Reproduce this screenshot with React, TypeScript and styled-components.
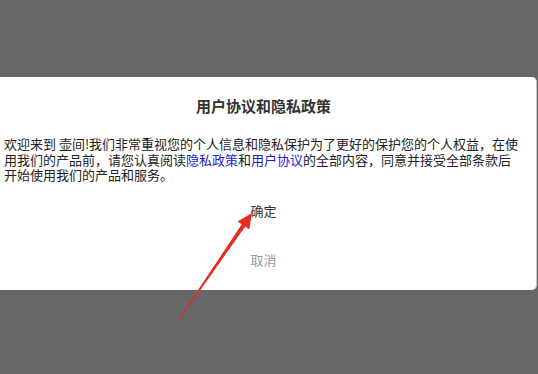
import styled, { createGlobalStyle } from "styled-components";

const GlobalStyle = createGlobalStyle`
  html, body {
    margin: 0;
    padding: 0;
    width: 538px;
    height: 374px;
    overflow: hidden;
  }
  body {
    font-family: "Noto Sans CJK SC", "Noto Sans", sans-serif;
  }
`;

const Overlay = styled.div`
  position: relative;
  width: 538px;
  height: 374px;
  background: #686868;
  padding-top: 77px;
  box-sizing: border-box;
  overflow: hidden;
`;

const Dialog = styled.div`
  margin-left: -4px;
  width: 541px;
  height: 213px;
  box-sizing: border-box;
  background: #fff;
  border-radius: 5px;
  border-right: 1px solid #c8c8c8;
  padding: 19px 15px 16px 8px;
  display: flex;
  flex-direction: column;
`;

const Title = styled.h2`
  margin: 0 0 0 2px;
  font-size: 15px;
  line-height: 20px;
  font-weight: bold;
  color: #333;
  text-align: center;
`;

const Body = styled.p`
  margin: 20px 0 0;
  font-size: 13px;
  line-height: 15.5px;
  color: #222;
`;

const Link = styled.span`
  color: #1c1ccf;
`;

const Actions = styled.div`
  margin-top: 13px;
  padding-left: 2px;
  display: flex;
  flex-direction: column;
  align-items: center;
  gap: 19px;
`;

const ActionButton = styled.button<{ $muted?: boolean }>`
  height: 30px;
  padding: 0 10px;
  border: none;
  background: transparent;
  font-family: inherit;
  font-size: 13px;
  color: ${(p) => (p.$muted ? "#999" : "#333")};
  cursor: pointer;
`;

const Annotation = styled.svg`
  position: absolute;
  left: 0;
  top: 0;
  pointer-events: none;
`;

export default function App() {
  return (
    <>
      <GlobalStyle />
      <Overlay>
        <Dialog>
          <Title>用户协议和隐私政策</Title>
          <Body>
            欢迎来到 壶间!我们非常重视您的个人信息和隐私保护为了更好的保护您的个人权益，在使用我们的产品前，请您认真阅读
            <Link>隐私政策</Link>和<Link>用户协议</Link>
            的全部内容，同意并接受全部条款后开始使用我们的产品和服务。
          </Body>
          <Actions>
            <ActionButton>确定</ActionButton>
            <ActionButton $muted>取消</ActionButton>
          </Actions>
        </Dialog>
        <Annotation width="538" height="374" viewBox="0 0 538 374">
          <polygon
            points="179.6,317.8 241.8,224.3 237.6,221.4 252,213 249.3,229.4 245.2,226.5 180.4,318.3"
            fill="#e62a20"
          />
        </Annotation>
      </Overlay>
    </>
  );
}
